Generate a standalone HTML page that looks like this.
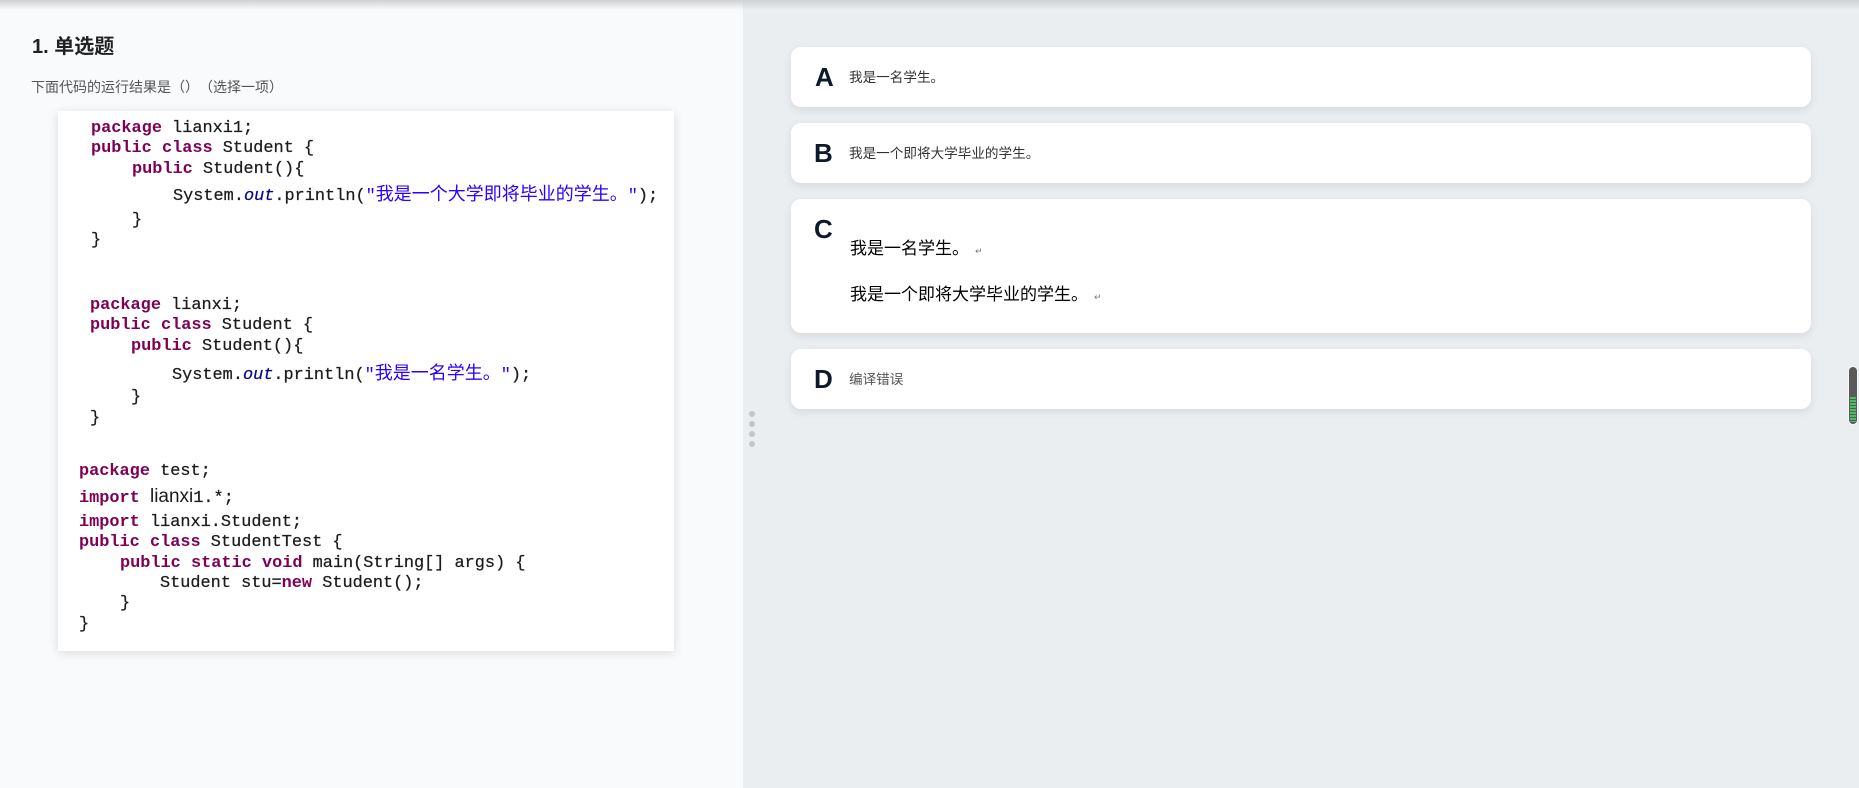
<!DOCTYPE html>
<html lang="zh">
<head>
<meta charset="utf-8">
<style>
html,body{margin:0;padding:0;width:1859px;height:788px;overflow:hidden}
body{position:relative;background:#ebeef1;font-family:"Liberation Sans","Noto Sans CJK SC",sans-serif;text-spacing-trim:space-all;font-feature-settings:"palt" 0,"halt" 0,"chws" 0}
#left{position:absolute;left:0;top:0;width:743px;height:788px;background:#f9fafc}
#topshadow{position:absolute;left:0;top:0;width:1859px;height:10px;background:linear-gradient(#cfd1d4,rgba(207,209,212,.6) 40%,rgba(207,209,212,0))}
h1{position:absolute;left:32px;top:33px;margin:0;font-size:20px;line-height:28px;font-weight:700;color:#222;white-space:nowrap;filter:blur(.25px)}
#q{position:absolute;left:31px;top:77px;font-size:14px;line-height:20px;color:#555;white-space:nowrap;filter:blur(.25px)}
#code{position:absolute;left:58px;top:111px;width:616px;height:540px;background:#fff;box-shadow:0 2px 10px rgba(0,0,0,.12)}
.l{position:absolute;font-family:"Liberation Mono",monospace;font-size:16.9px;line-height:20px;height:20px;white-space:pre;color:#1c1c1c;filter:blur(.3px);-webkit-text-stroke:.25px #1c1c1c}
.l b{color:#7f0055;font-weight:700;-webkit-text-stroke:0}
.l i{color:#0000c0;font-style:italic}
.l u{text-decoration:none;color:#2a00ff;-webkit-text-stroke:0}
.l u span{font-family:"Noto Sans CJK SC",sans-serif;font-size:18px}
.l em{font-style:normal;font-family:"Liberation Sans",sans-serif;font-size:19px;-webkit-text-stroke:0}
.card{position:absolute;left:791px;width:1020px;background:#fff;border-radius:10px;box-shadow:0 3px 9px rgba(0,0,0,.09)}
.k{position:absolute;font-family:"Liberation Sans",sans-serif;font-weight:700;font-size:26px;line-height:30px;color:#0e1a2b;top:15px}
.t{position:absolute;left:58px;font-size:13.6px;line-height:20px;color:#333;white-space:nowrap}
.c{position:absolute;left:59px;font-size:17px;line-height:24px;color:#000;white-space:nowrap}
.c s{text-decoration:none;font-family:"DejaVu Sans",sans-serif;font-size:9px;color:#777;margin-left:6px}
.dot{position:absolute;left:749px;width:6px;height:6px;border-radius:50%;background:#c4c6c9}
#sb{position:absolute;left:1849px;top:367px;width:8px;height:57px;border-radius:4px;background:#5a5a5a;box-shadow:0 0 0 1px rgba(255,255,255,.55)}
#sb div{position:absolute;left:1px;top:30px;width:6px;height:25px;background:repeating-linear-gradient(#4dbb5f 0 1.8px,#5a5a5a 1.8px 3px)}
</style>
</head>
<body>
<div id="left">
<h1>1. 单选题</h1>
<div id="q">下面代码的运行结果是（）（选择一项）</div>
<div id="code">
<div class="l" style="left:33px;top:8px"><b>package</b> lianxi1;</div>
<div class="l" style="left:33px;top:28px"><b>public</b> <b>class</b> Student {</div>
<div class="l" style="left:74px;top:49px"><b>public</b> Student(){</div>
<div class="l" style="left:115px;top:72px">System.<i>out</i>.println(<u>"<span>我是一个大学即将毕业的学生。</span>"</u>);</div>
<div class="l" style="left:74px;top:100px">}</div>
<div class="l" style="left:33px;top:120px">}</div>
<div class="l" style="left:32px;top:185px"><b>package</b> lianxi;</div>
<div class="l" style="left:32px;top:205px"><b>public</b> <b>class</b> Student {</div>
<div class="l" style="left:73px;top:226px"><b>public</b> Student(){</div>
<div class="l" style="left:114px;top:251px">System.<i>out</i>.println(<u>"<span>我是一名学生。</span>"</u>);</div>
<div class="l" style="left:73px;top:277px">}</div>
<div class="l" style="left:32px;top:298px">}</div>
<div class="l" style="left:21px;top:351px"><b>package</b> test;</div>
<div class="l" style="left:21px;top:376px"><b>import</b> <em>lianxi</em>1.*;</div>
<div class="l" style="left:21px;top:402px"><b>import</b> lianxi.Student;</div>
<div class="l" style="left:21px;top:422px"><b>public</b> <b>class</b> StudentTest {</div>
<div class="l" style="left:62px;top:443px"><b>public</b> <b>static</b> <b>void</b> main(String[] args) {</div>
<div class="l" style="left:102px;top:463px">Student stu=<b>new</b> Student();</div>
<div class="l" style="left:62px;top:483px">}</div>
<div class="l" style="left:21px;top:504px">}</div>
</div>
</div>
<div id="topshadow"></div>
<div class="dot" style="top:411px"></div>
<div class="dot" style="top:421px"></div>
<div class="dot" style="top:431px"></div>
<div class="dot" style="top:441px"></div>
<div class="card" style="top:47px;height:60px">
<div class="k" style="left:24px">A</div>
<div class="t" style="top:21px">我是一名学生。</div>
</div>
<div class="card" style="top:123px;height:60px">
<div class="k" style="left:23px">B</div>
<div class="t" style="top:21px">我是一个即将大学毕业的学生。</div>
</div>
<div class="card" style="top:199px;height:134px">
<div class="k" style="left:23px">C</div>
<div class="c" style="top:38px">我是一名学生。<s>↵</s></div>
<div class="c" style="top:84px">我是一个即将大学毕业的学生。<s>↵</s></div>
</div>
<div class="card" style="top:349px;height:60px">
<div class="k" style="left:23px">D</div>
<div class="t" style="top:21px;color:#555">编译错误</div>
</div>
<div id="sb"><div></div></div>
</body>
</html>
